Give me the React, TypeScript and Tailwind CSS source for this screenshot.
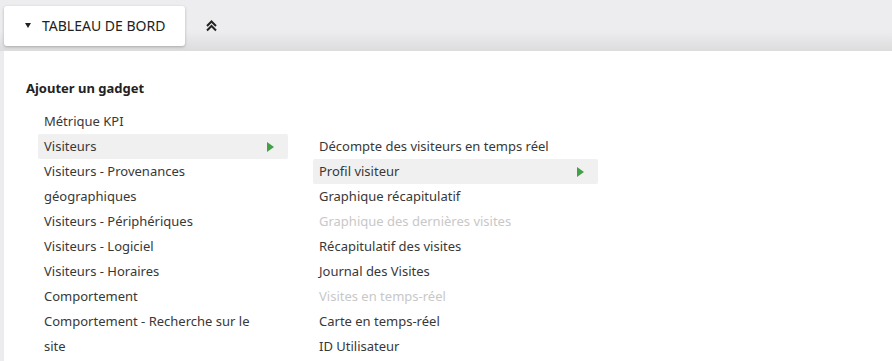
import React from 'react';

const leftItems = [
  { label: 'Métrique KPI' },
  { label: 'Visiteurs', active: true },
  { label: 'Visiteurs - Provenances géographiques' },
  { label: 'Visiteurs - Périphériques' },
  { label: 'Visiteurs - Logiciel' },
  { label: 'Visiteurs - Horaires' },
  { label: 'Comportement' },
  { label: 'Comportement - Recherche sur le site' },
];

const rightItems = [
  { label: 'Décompte des visiteurs en temps réel' },
  { label: 'Profil visiteur', active: true },
  { label: 'Graphique récapitulatif' },
  { label: 'Graphique des dernières visites', disabled: true },
  { label: 'Récapitulatif des visites' },
  { label: 'Journal des Visites' },
  { label: 'Visites en temps-réel', disabled: true },
  { label: 'Carte en temps-réel' },
  { label: 'ID Utilisateur' },
];

const GreenArrow = () => (
  <svg width="7" height="10" viewBox="0 0 7 10" className="shrink-0">
    <path d="M0 0L7 5L0 10Z" fill="#43a047" />
  </svg>
);

type Item = { label: string; active?: boolean; disabled?: boolean };

const MenuRow = ({ item }: { item: Item }) => (
  <li
    className={`flex items-center justify-between pl-[6px] pr-[14px] leading-[25px] rounded-[2px] ${
      item.active ? 'bg-[#f0f0f0]' : ''
    } ${item.disabled ? 'text-[#c8c8c8]' : 'text-[#383838]'}`}
  >
    <span>{item.label}</span>
    {item.active && <GreenArrow />}
  </li>
);

export default function App() {
  return (
    <div
      className="w-[892px] h-[361px] overflow-hidden bg-[#ececee] text-[13px]"
      style={{ fontFamily: '"Noto Sans", "Open Sans", sans-serif' }}
    >
      {/* top bar */}
      <div className="h-[51px] flex items-center pl-[4px] bg-gradient-to-b from-[#ededef] from-60% to-[#dcdcdd]">
        <button className="h-[40px] w-[181px] bg-white rounded-[3px] shadow-[0_1px_3px_rgba(0,0,0,0.25)] flex items-center pl-[21px] gap-[11px] text-[14px] text-[#222]">
          <svg width="6" height="5" viewBox="0 0 6 5">
            <path d="M0 0H6L3 5Z" fill="#222" />
          </svg>
          <span>TABLEAU DE BORD</span>
        </button>
        <svg width="13" height="13" viewBox="0 0 13 13" className="ml-[20px]" fill="none" stroke="#222" strokeWidth="2">
          <path d="M2 7L6.5 2.5L11 7" />
          <path d="M2 11.5L6.5 7L11 11.5" />
        </svg>
      </div>

      {/* gadget panel */}
      <div className="ml-[4px] h-[310px] bg-white pt-[26px] pl-[21px]">
        <h3 className="font-bold text-[#222] leading-[22px] mb-[10px] pl-[1px]">Ajouter un gadget</h3>
        <div className="flex gap-[25px] pl-[13px]">
          <ul className="w-[250px]">
            {leftItems.map((item) => (
              <MenuRow key={item.label} item={item} />
            ))}
          </ul>
          <ul className="w-[285px] mt-[25px]">
            {rightItems.map((item) => (
              <MenuRow key={item.label} item={item} />
            ))}
          </ul>
        </div>
      </div>
    </div>
  );
}
